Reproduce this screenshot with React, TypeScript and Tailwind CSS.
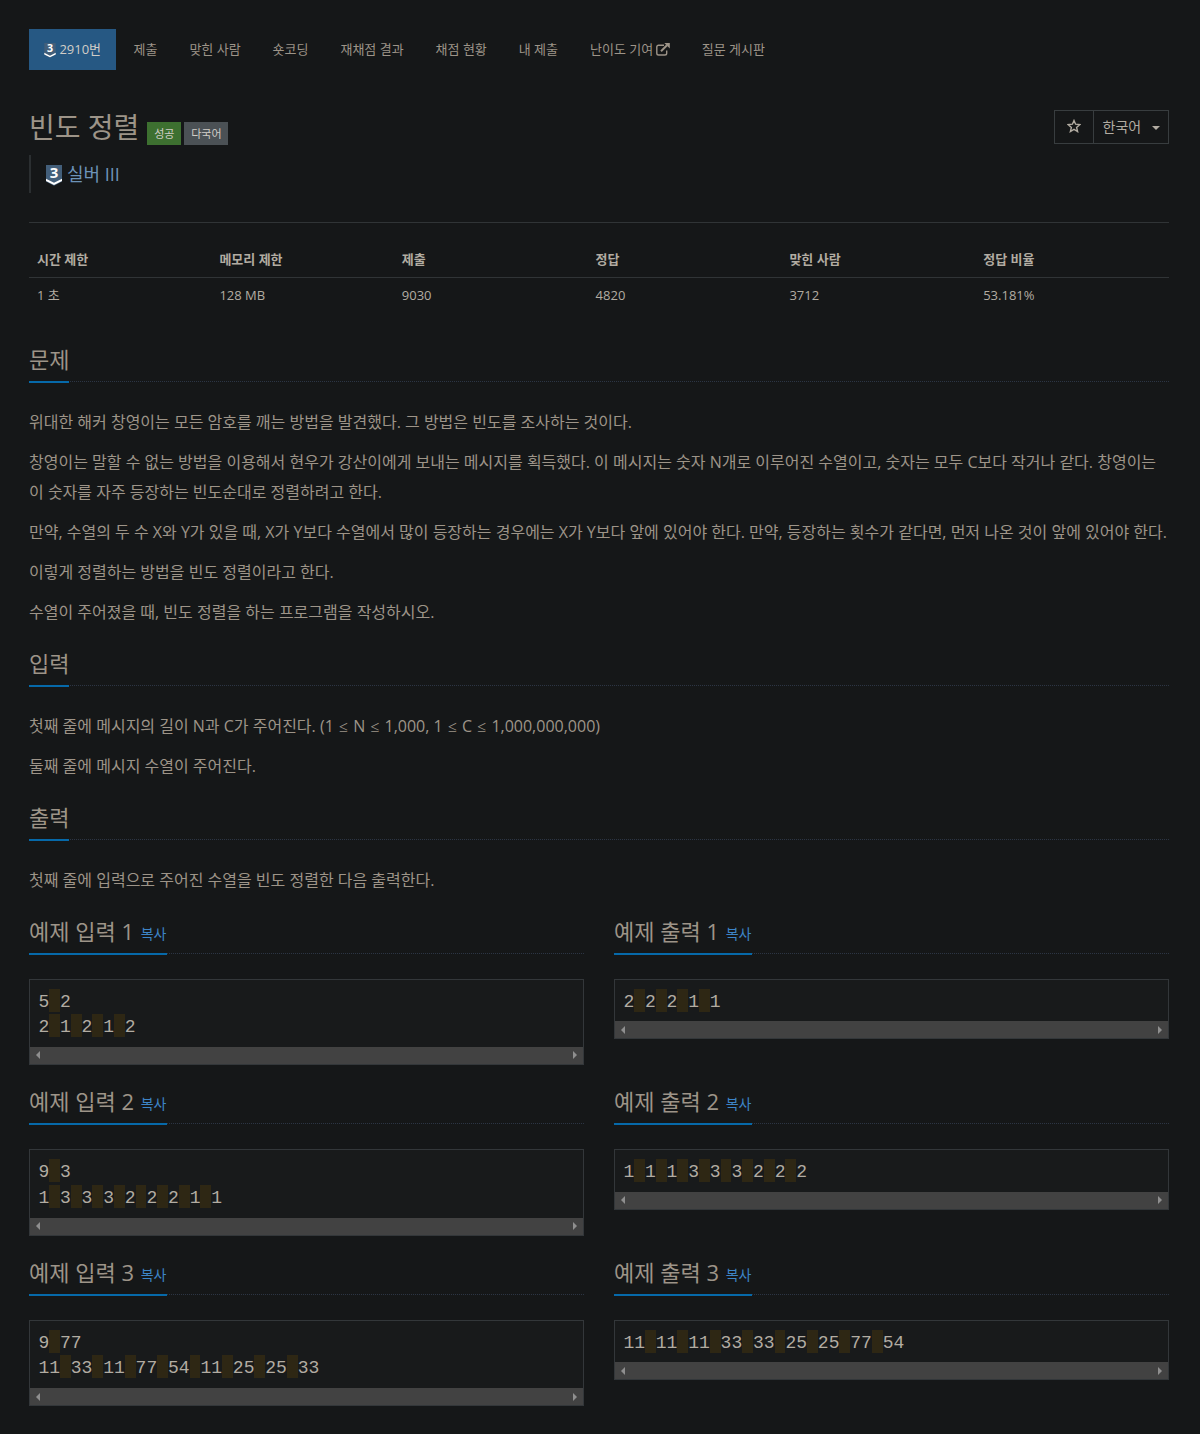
import type { ReactNode } from "react";

const menu = ["제출", "맞힌 사람", "숏코딩", "재채점 결과", "채점 현황", "내 제출", "난이도 기여", "질문 게시판"];

const info = [
  ["시간 제한", "1 초"],
  ["메모리 제한", "128 MB"],
  ["제출", "9030"],
  ["정답", "4820"],
  ["맞힌 사람", "3712"],
  ["정답 비율", "53.181%"],
];

const samples = [
  { input: ["5 2", "2 1 2 1 2"], output: ["2 2 2 1 1"] },
  { input: ["9 3", "1 3 3 3 2 2 2 1 1"], output: ["1 1 1 3 3 3 2 2 2"] },
  { input: ["9 77", "11 33 11 77 54 11 25 25 33"], output: ["11 11 11 33 33 25 25 77 54"] },
];

function Tier({ className }: { className: string }) {
  return (
    <svg className={className} viewBox="0 0 16 21" overflow="visible">
      <path d="M0 0h16v16.5l-8 4.3-8-4.3z" fill="#435f7a" />
      <path d="M0 13.8l8 4 8-4v2.3l-8 4-8-4z" fill="#fff" />
      <text x="8" y="13" textAnchor="middle" fontSize="15" fontWeight="700" fontFamily="Noto Sans" fill="#fff">3</text>
    </svg>
  );
}

function Headline({ children }: { children: ReactNode }) {
  return (
    <div className="h-[39px] border-b border-dotted border-[#2c3544]">
      <h2 className="inline-block h-10 border-b-2 border-[#0669a9] text-[22px] leading-[33px] text-[#9d9488]">{children}</h2>
    </div>
  );
}

function Section({ title, lines, className }: { title: string; lines: ReactNode[]; className: string }) {
  return (
    <section className={className}>
      <Headline>{title}</Headline>
      <div className="mt-[25px] space-y-[10px] text-base leading-[30px] text-[#9d9488]">
        {lines.map((line, i) => (
          <p key={i}>{line}</p>
        ))}
      </div>
    </section>
  );
}

function Le() {
  return <span className="inline-block w-[11px] text-center font-['Liberation_Serif',serif] leading-none">≤</span>;
}

function Sample({ title, lines }: { title: string; lines: string[] }) {
  return (
    <div className="w-[555px]">
      <Headline>
        {title} <span className="relative -top-px ml-px pr-px text-[14px] text-[#3d84c6]">복사</span>
      </Headline>
      <div className="mt-[25px] border border-[#33373a] bg-[#181a1b]">
        <pre className="px-2 pt-[9px] pb-[7px] font-['Liberation_Mono',monospace] text-[18px] leading-[27.7px] text-[#b2aca2]">
          {lines.map((line, i) => (
            <div key={i} className="flex h-[25.7px] pl-[0.4px]">
              {line.split(" ").map((word, j) => (
                <span key={j} className="flex">
                  {j > 0 && <span className="h-[23px] w-[10.8px] bg-[#2e2714]"> </span>}
                  {word}
                </span>
              ))}
            </div>
          ))}
        </pre>
        <div className="flex h-[17px] items-center justify-between bg-[#424242] px-[6px]">
          <span className="border-y-4 border-r-4 border-y-transparent border-r-[#8f8f8f]" />
          <span className="border-y-4 border-l-4 border-y-transparent border-l-[#8f8f8f]" />
        </div>
      </div>
    </div>
  );
}

export default function App() {
  return (
    <div className="h-[1434px] overflow-hidden bg-[#151718] pt-[29px] pl-[29px] font-['Open_Sans','Noto_Sans_CJK_KR',sans-serif] text-[13px] text-[#9d9488]">
      <div className="w-[1140px]">
        <nav className="flex h-[41px] items-center gap-8">
          <a className="mr-[-14.5px] flex h-full w-[87px] items-center bg-[#265883] pl-[15px] text-[#d1cdc7]">
            <Tier className="mt-px mr-[3.4px] h-[15px] w-3" />
            2910번
          </a>
          {menu.map((item) => (
            <a key={item} className="mr-[-0.04px] flex items-center whitespace-nowrap">
              {item}
              {item === "난이도 기여" && (
                <svg className="ml-[2.6px] h-[13px] w-[14px]" viewBox="0 0 14 13" fill="none" stroke="currentColor" strokeWidth="1.4">
                  <path d="M8 2.2H2.6Q.8 2.2 .8 4v6.2Q.8 12 2.6 12h6.3q1.8 0 1.8-1.8V7.4" />
                  <path d="M5 8.2l6-6" strokeWidth="2" />
                  <path d="M8.3 0H13.8V5.5z" fill="currentColor" stroke="none" />
                </svg>
              )}
            </a>
          ))}
        </nav>

        <div className="mt-10 flex h-[45px] justify-between">
          <div className="flex">
            <h1 className="text-[28px] leading-[34px]">빈도 정렬</h1>
            <span className="mt-[12px] ml-2 h-[23px] w-[34px] bg-[#3d7030] text-center text-[11px] leading-[23px] text-[#d1cdc7]">성공</span>
            <span className="mt-[12px] ml-[3px] h-[23px] w-[44px] bg-[#4b5155] text-center text-[11px] leading-[23px] text-[#d1cdc7]">다국어</span>
          </div>
          <div className="flex h-[34px] border border-[#383d3f] text-sm text-[#b2aca2]">
            <span className="flex w-[39px] items-center justify-center border-r border-[#383d3f] pb-[2px]">
              <svg className="h-[14px] w-[14px]" viewBox="0 0 14 14" fill="none" stroke="currentColor" strokeWidth="1.4">
                <path d="M7 1.5l1.6 3.7 4.2.4-3.2 2.8 1 4.1L7 10.3l-3.6 2.2 1-4.1L1.2 5.6l4.2-.4z" />
              </svg>
            </span>
            <span className="flex w-[74px] items-center pl-[8.6px]">
              한국어
              <span className="mt-[2px] ml-[10.4px] border-x-4 border-t-4 border-x-transparent border-t-[#b2aca2]" />
            </span>
          </div>
        </div>

        <div className="flex h-[38px] items-center border-l-2 border-[#2b2f31] pl-[15px] text-[18px] text-[#6c93b8]">
          <Tier className="mt-[2px] mr-[5px] h-[21px] w-4" />
          실버 III
        </div>

        <hr className="mt-[29px] border-[#303436]" />

        <div className="mt-[19px] grid grid-cols-[16fr_16fr_17fr_17fr_17fr_17fr] text-[#b2aca2]">
          {info.map(([label, value]) => (
            <div key={label}>
              <div className="h-9 border-b border-[#303436] pl-2 leading-[35px] font-bold">{label}</div>
              <div className="h-[37px] pl-2 leading-[35px]">{value}</div>
            </div>
          ))}
        </div>

        <Section
          className="mt-[28px]"
          title="문제"
          lines={[
            "위대한 해커 창영이는 모든 암호를 깨는 방법을 발견했다. 그 방법은 빈도를 조사하는 것이다.",
            "창영이는 말할 수 없는 방법을 이용해서 현우가 강산이에게 보내는 메시지를 획득했다. 이 메시지는 숫자 N개로 이루어진 수열이고, 숫자는 모두 C보다 작거나 같다. 창영이는 이 숫자를 자주 등장하는 빈도순대로 정렬하려고 한다.",
            "만약, 수열의 두 수 X와 Y가 있을 때, X가 Y보다 수열에서 많이 등장하는 경우에는 X가 Y보다 앞에 있어야 한다. 만약, 등장하는 횟수가 같다면, 먼저 나온 것이 앞에 있어야 한다.",
            "이렇게 정렬하는 방법을 빈도 정렬이라고 한다.",
            "수열이 주어졌을 때, 빈도 정렬을 하는 프로그램을 작성하시오.",
          ]}
        />
        <Section
          className="mt-5"
          title="입력"
          lines={[
            <>
              첫째 줄에 메시지의 길이 N과 C가 주어진다. (1 <Le /> N <Le /> 1,000, 1 <Le /> C <Le /> 1,000,000,000)
            </>,
            "둘째 줄에 메시지 수열이 주어진다.",
          ]}
        />
        <Section className="mt-[19.6px]" title="출력" lines={["첫째 줄에 입력으로 주어진 수열을 빈도 정렬한 다음 출력한다."]} />

        <div className="mt-5 flex flex-col">
          {samples.map((sample, i) => (
            <div key={i} className="flex h-[170.6px] items-start justify-between">
              <Sample title={`예제 입력 ${i + 1}`} lines={sample.input} />
              <Sample title={`예제 출력 ${i + 1}`} lines={sample.output} />
            </div>
          ))}
        </div>
      </div>
    </div>
  );
}
